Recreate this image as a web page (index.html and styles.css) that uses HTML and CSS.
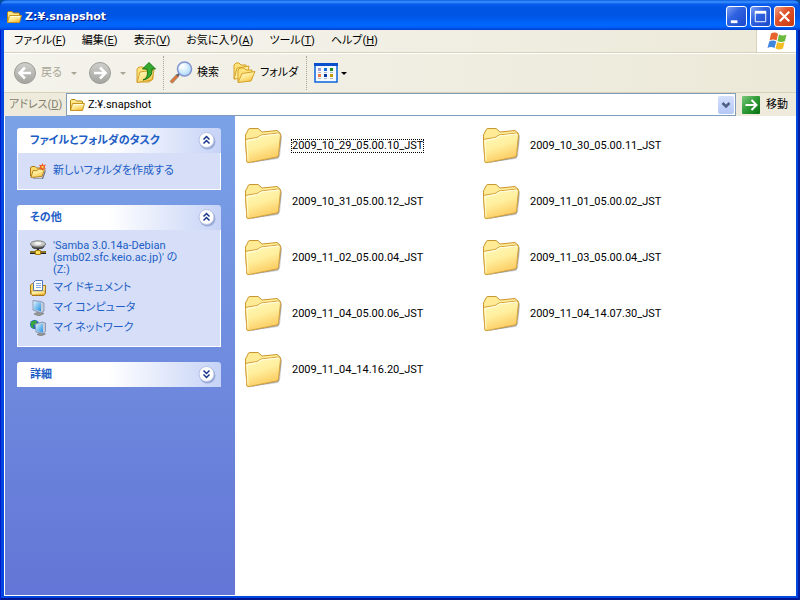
FILE: index.html
```html
<!DOCTYPE html>
<html lang="ja">
<head>
  <meta charset="UTF-8">
  <title>Z:¥.snapshot</title>
  <link rel="stylesheet" href="styles.css">
</head>
<body>

<svg class="defs" aria-hidden="true">
  <defs>
    <linearGradient id="gFolder" x1="0" y1="0" x2="0.6" y2="1">
      <stop offset="0" stop-color="#fffbcb"/>
      <stop offset="0.55" stop-color="#ffe992"/>
      <stop offset="1" stop-color="#f7bf42"/>
    </linearGradient>
    <linearGradient id="gBig" x1="0.1" y1="0" x2="0.5" y2="1">
      <stop offset="0" stop-color="#fff9bb"/>
      <stop offset="0.5" stop-color="#ffef9e"/>
      <stop offset="1" stop-color="#fcc95c"/>
    </linearGradient>
    <linearGradient id="gBack" x1="0" y1="0" x2="0" y2="1">
      <stop offset="0" stop-color="#fff6b0"/>
      <stop offset="1" stop-color="#edbc3c"/>
    </linearGradient>
    <linearGradient id="gGrey" x1="0" y1="0" x2="0" y2="1">
      <stop offset="0" stop-color="#cfcfcb"/>
      <stop offset="1" stop-color="#a3a3a0"/>
    </linearGradient>
    <linearGradient id="gGreen" x1="0" y1="0" x2="1" y2="1">
      <stop offset="0" stop-color="#7cc87c"/>
      <stop offset="0.5" stop-color="#2d9a35"/>
      <stop offset="1" stop-color="#08700f"/>
    </linearGradient>
    <radialGradient id="gLens" cx="0.4" cy="0.35" r="0.7">
      <stop offset="0" stop-color="#ffffff"/>
      <stop offset="1" stop-color="#a5d8fb"/>
    </radialGradient>
    <linearGradient id="gScreen" x1="0" y1="0" x2="1" y2="1">
      <stop offset="0" stop-color="#d9f2ff"/>
      <stop offset="1" stop-color="#238fe0"/>
    </linearGradient>
  </defs>

  <!-- big folder -->
  <symbol id="folder" viewBox="0 0 40 40">
    <path d="M4 37 L34 33 L36 30 L38 11 L36 8 V28 Z" fill="#666" opacity="0.3"/>
    <path d="M4 37.500 L33 32 Q35.500 31 35.500 28 L37.500 9 L36 8 L33 29 Z" fill="#666" opacity="0.6"/>
    <path d="M1.500 15 V9 L4 4 Q4.500 2.500 6 2.500 H14 L18 6 L33 4.500 L36.500 7.500 L34 29 L3 36 Z" fill="#ffeb96" stroke="#c9962f"/>
    <path d="M3 36 L1.500 15 Q1.500 13.500 3 13 L13 11.500 L17 9 L34.500 7 Q36.500 7 36.500 9 L34.500 29 Q34.500 30.500 33 31 L5 36.500 Q3 37 3 36 Z" fill="url(#gBig)" stroke="#d6a440"/>
    <path d="M2.500 15 L13.500 12.500 L17.500 10 L35 8" fill="none" stroke="#fffde6"/>
    <path d="M3 14 L4 35" stroke="#fffbd0"/>
  </symbol>

  <!-- small folder, title bar and address -->
  <symbol id="folder16" viewBox="0 0 16 16">
    <path d="M1.500 13 V3.500 L2.500 2.500 H6 L7.500 4 H13 L13.500 5 V7 L11 13 Z" fill="#ffe88a" stroke="#b8860b"/>
    <path d="M1.500 13.500 L3.500 6.500 H15.500 L13.500 13.500 Z" fill="url(#gFolder)" stroke="#c8951e"/>
    <path d="M4.500 7.500 H14" stroke="#fffde0"/>
  </symbol>

  <symbol id="back" viewBox="0 0 24 24">
    <circle cx="12" cy="12" r="10.500" fill="url(#gGrey)" stroke="#9c9c98"/>
    <path d="M18 12 H7 M12 6.500 L6.500 12 L12 17.500" fill="none" stroke="#fff" stroke-width="2.600"/>
  </symbol>
  <symbol id="forward" viewBox="0 0 24 24">
    <circle cx="12" cy="12" r="10.500" fill="url(#gGrey)" stroke="#9c9c98"/>
    <path d="M6 12 H17 M12 6.500 L17.500 12 L12 17.500" fill="none" stroke="#fff" stroke-width="2.600"/>
  </symbol>

  <symbol id="up" viewBox="0 0 24 24">
    <path d="M3 21 V8 L5 6 H9 L11 8 H19 V18 L15 21 Z" fill="#ffe27a" stroke="#d3a12b"/>
    <path d="M3 21.500 L6 11 L20 9 L18 19 Z" fill="url(#gFolder)" stroke="#d3a12b"/>
    <path d="M9 19 Q15 17 13 8 H8.500 L15 1.500 L21.500 8 H18 Q19 17 9 19 Z" fill="#35a92d" stroke="#187818"/>
  </symbol>

  <symbol id="search" viewBox="0 0 24 24">
    <path d="M9 14 L2 21.500" stroke="#9a9a9a" stroke-width="4"/>
    <path d="M9 14 L2 21.500" stroke="#e17632" stroke-width="2.500"/>
    <path d="M11 12 L8 15" stroke="#555b70" stroke-width="2"/>
    <circle cx="15.500" cy="8" r="7" fill="url(#gLens)" stroke="#8494d0" stroke-width="1.500"/>
    <path d="M11 8 Q11.500 4 15.500 3.500" fill="none" stroke="#fff" stroke-width="1.500"/>
  </symbol>

  <symbol id="folders" viewBox="0 0 24 24">
    <path d="M2 18 V4 L4 2 H7 L9 4 H14 V14 Z" fill="#ffe27a" stroke="#d3a12b"/>
    <path d="M2 18 L5 7 L17 5 L15 17 Z" fill="#ffeb99" stroke="#d3a12b"/>
    <path d="M6 21 V9 L8 7 H12 L14 9 H20 V18 Z" fill="#ffe27a" stroke="#d3a12b"/>
    <path d="M6 21.500 L10 12.500 L23 10.500 L19 20 Z" fill="url(#gFolder)" stroke="#d3a12b"/>
  </symbol>

  <symbol id="views" viewBox="0 0 24 20">
    <rect x="1" y="1" width="22" height="18" fill="#f4f8ff" stroke="#0a64d8" stroke-width="1.500"/>
    <rect x="0" y="0" width="24" height="3" fill="#0a50cc"/>
    <path d="M4 5h3v3h-3z" fill="#9c9ccc"/>
    <path d="M10 5h3v3h-3z" fill="#1870d8"/>
    <path d="M16 5h3v3h-3z" fill="#1c8c1c"/>
    <path d="M4 11h3v3h-3z" fill="#f07840"/>
    <path d="M10 11h3v3h-3z" fill="#0838a0"/>
    <path d="M16 11h3v3h-3z" fill="#c89c00"/>
    <path d="M4 9.500h3M10 9.500h3M16 9.500h3M4 15.500h3M10 15.500h3M16 15.500h3" stroke="#b8b8c0"/>
  </symbol>

  <symbol id="go" viewBox="0 0 18 18">
    <rect width="18" height="18" rx="1" fill="url(#gGreen)"/>
    <path d="M3.500 9 H14 M9.500 4 L14.500 9 L9.500 14" fill="none" stroke="#fff" stroke-width="2"/>
  </symbol>

  <symbol id="flag" viewBox="0 0 20 19">
    <path d="M4 1.500 Q8 -0.500 11 2 L9.500 8.500 Q6 6.500 2.500 8.500 Z" fill="#e8622c"/>
    <path d="M12 2.500 Q16 4.500 19.500 2.500 L18 9 Q14 11 10.500 9 Z" fill="#6cba3c"/>
    <path d="M2.200 9.500 Q6 7.500 9.200 9.500 L7.500 16 Q4 14 0.500 16 Z" fill="#3f86dc"/>
    <path d="M10.200 10 Q14 12 17.500 10 L16 16.500 Q12 18.500 8.500 16.500 Z" fill="#f6bc24"/>
  </symbol>

  <symbol id="up2" viewBox="0 0 18 18">
    <circle cx="9.500" cy="9.500" r="8" fill="#6b7fb8" opacity="0.5"/>
    <circle cx="8.500" cy="8" r="7.500" fill="#fff" stroke="#b4c0e4"/>
    <path d="M5.500 7.500 L8.500 4.500 L11.500 7.500 M5.500 11.500 L8.500 8.500 L11.500 11.500" fill="none" stroke="#17348c" stroke-width="1.500"/>
  </symbol>
  <symbol id="down2" viewBox="0 0 18 18">
    <circle cx="9.500" cy="9.500" r="8" fill="#6b7fb8" opacity="0.5"/>
    <circle cx="8.500" cy="8" r="7.500" fill="#fff" stroke="#b4c0e4"/>
    <path d="M5.500 4.500 L8.500 7.500 L11.500 4.500 M5.500 8.500 L8.500 11.500 L11.500 8.500" fill="none" stroke="#17348c" stroke-width="1.500"/>
  </symbol>

  <symbol id="newfolder" viewBox="0 0 16 16">
    <path d="M3 15.500 H12 L15.500 6 V9 L13 16 H3 Z" fill="#333" opacity="0.7"/>
    <path d="M0.500 13 V4.500 L2 3.500 H5 L6.500 5 H12 V12 Z" fill="#fbdc6c" stroke="#a87818"/>
    <path d="M1 14.500 L3 7.500 Q7 8.500 9 6 L14.500 6.500 L12 13.500 Z" fill="url(#gFolder)" stroke="#b48420"/>
    <path d="M12.500 0 L13.300 2.200 L16 1.500 L14.500 4 L16 6 L13.300 5.500 L12.500 8 L11.300 5.500 L9 6 L10.300 4 L9 1.800 L11.500 2.200 Z" fill="#f0501c"/>
    <circle cx="12.500" cy="4" r="1.200" fill="#ffd24a"/>
  </symbol>

  <symbol id="netdrive" viewBox="0 0 16 16">
    <path d="M0.500 4 L3 8 Q8 10 13 8 L15.500 4 Z" fill="#54544f" stroke="#444"/>
    <ellipse cx="8" cy="3.800" rx="7.500" ry="3" fill="#c8c8c4" stroke="#888"/>
    <ellipse cx="8" cy="3.200" rx="3.500" ry="1.500" fill="#f4f4f2"/>
    <path d="M7 8 h2 v3 h-2 z" fill="#333"/>
    <path d="M0 12.500 H16" stroke="#222" stroke-width="3"/>
    <path d="M0 12 H16" stroke="#f2c230"/>
    <path d="M5.500 10.500 h5 v4 h-5 z" fill="#ffdf5a" stroke="#a87c10"/>
  </symbol>

  <symbol id="docs" viewBox="0 0 16 16">
    <path d="M0.500 14 V5 L2.500 3.500 H5 V14.500 H2 Z" fill="#fbd75c" stroke="#a87818"/>
    <path d="M5 14 V5.500 H15.500 V13.500 L14 15.500 H2 Z" fill="#fbe28a" stroke="#a87818"/>
    <path d="M3.500 10.500 V2.500 L5.500 0.500 H12.500 V10.500 Z" fill="#fff" stroke="#5078bc"/>
    <path d="M6 3.500 H11 M6 5.500 H11 M6 7.500 H11" stroke="#86a8e0"/>
    <path d="M1.500 15 V11 H15 V14 L13.500 15 Z" fill="url(#gFolder)" stroke="#a87818" stroke-width="0.500"/>
  </symbol>

  <symbol id="pc" viewBox="0 0 16 16">
    <path d="M4 14 L9 11.500 L14 13.500 L9 16 Z" fill="#989890" stroke="#606058" stroke-width="0.500"/>
    <path d="M3 0.500 L11 1.500 L14 3 V11 L11 13 L3 10 Z" fill="#c4ccd8" stroke="#7888b0" stroke-width="0.800"/>
    <path d="M3.500 1.500 L11 2.500 V11.500 L3.500 9 Z" fill="url(#gScreen)"/>
  </symbol>

  <symbol id="net" viewBox="0 0 16 16">
    <circle cx="4.500" cy="4.500" r="4.500" fill="#1c64c8"/>
    <path d="M1 2 Q4 -0.500 7 1 L6 4 L3 5 L4 8 L2 8 Q0 5 1 2 Z" fill="#3aa838"/>
    <path d="M7 14.500 L11 12.500 L15.500 14 L11 16 Z" fill="#989890" stroke="#606058" stroke-width="0.500"/>
    <path d="M5 4 L12 2 L15.500 3 V11.500 L13 13.500 L6 12 Z" fill="#c4ccd8" stroke="#7888b0" stroke-width="0.800"/>
    <path d="M6 5 L13 3.500 V12.500 L6.500 11 Z" fill="url(#gScreen)"/>
  </symbol>
</svg>

<div class="window">
  <header class="titlebar">
    <svg class="ico16"><use href="#folder16"/></svg>
    <h1>Z:¥.snapshot</h1>
    <button class="winbtn" aria-label="最小化"><svg viewBox="0 0 20 20"><path d="M4 14h7v3h-7z" fill="#fff"/></svg></button>
    <button class="winbtn" aria-label="最大化"><svg viewBox="0 0 20 20"><path d="M4.500 6 V15.500 H15.500 V6" fill="none" stroke="#fff"/><path d="M4 5.500 H16" stroke="#fff" stroke-width="3"/></svg></button>
    <button class="winbtn close" aria-label="閉じる"><svg viewBox="0 0 20 20"><path d="M5 5 L15 15 M15 5 L5 15" stroke="#fff" stroke-width="2.200"/></svg></button>
  </header>

  <nav class="menubar">
    <button>ファイル(<u>F</u>)</button>
    <button>編集(<u>E</u>)</button>
    <button>表示(<u>V</u>)</button>
    <button>お気に入り(<u>A</u>)</button>
    <button>ツール(<u>T</u>)</button>
    <button>ヘルプ(<u>H</u>)</button>
    <div class="brand"><svg><use href="#flag"/></svg></div>
  </nav>

  <div class="toolbar">
    <button class="tool back" disabled><svg class="ico24"><use href="#back"/></svg>戻る<i class="caret"></i></button>
    <button class="tool forward" disabled aria-label="進む"><svg class="ico24"><use href="#forward"/></svg><i class="caret"></i></button>
    <button class="tool" aria-label="上へ"><svg class="ico24"><use href="#up"/></svg></button>
    <span class="sep"></span>
    <button class="tool"><svg class="ico24"><use href="#search"/></svg>検索</button>
    <button class="tool folders"><svg class="ico24"><use href="#folders"/></svg>フォルダ</button>
    <span class="sep"></span>
    <button class="tool views" aria-label="表示"><svg class="icoviews"><use href="#views"/></svg><i class="caret"></i></button>
  </div>

  <form class="address" onsubmit="return false">
    <label for="path">アドレス(<u>D</u>)</label>
    <div class="combo">
      <svg class="ico16"><use href="#folder16"/></svg>
      <input type="text" id="path" value="Z:¥.snapshot">
      <button type="button" class="drop" aria-label="一覧"><svg viewBox="0 0 16 18"><path d="M4.500 7 L8 10.500 L11.500 7" fill="none" stroke="#4d6185" stroke-width="2.500"/></svg></button>
    </div>
    <button class="go"><svg><use href="#go"/></svg>移動</button>
  </form>

  <div class="content">
    <aside class="sidebar">
      <section class="panel">
        <div class="panel-head">
          <h2>ファイルとフォルダのタスク</h2>
          <button aria-label="閉じる"><svg><use href="#up2"/></svg></button>
        </div>
        <div class="panel-body">
          <a href="#"><svg class="ico16"><use href="#newfolder"/></svg><span>新しいフォルダを作成する</span></a>
        </div>
      </section>

      <section class="panel">
        <div class="panel-head">
          <h2>その他</h2>
          <button aria-label="閉じる"><svg><use href="#up2"/></svg></button>
        </div>
        <div class="panel-body">
          <a href="#" class="drive"><svg class="ico16"><use href="#netdrive"/></svg><span>'Samba 3.0.14a-Debian<br>(smb02.sfc.keio.ac.jp)' の<br>(Z:)</span></a>
          <a href="#"><svg class="ico16"><use href="#docs"/></svg><span>マイ ドキュメント</span></a>
          <a href="#"><svg class="ico16"><use href="#pc"/></svg><span>マイ コンピュータ</span></a>
          <a href="#"><svg class="ico16"><use href="#net"/></svg><span>マイ ネットワーク</span></a>
        </div>
      </section>

      <section class="panel">
        <div class="panel-head">
          <h2>詳細</h2>
          <button aria-label="開く"><svg><use href="#down2"/></svg></button>
        </div>
      </section>
    </aside>

    <main class="files">
      <a href="#" class="file focused"><svg><use href="#folder"/></svg><span>2009_10_29_05.00.10_JST</span></a>
      <a href="#" class="file"><svg><use href="#folder"/></svg><span>2009_10_30_05.00.11_JST</span></a>
      <a href="#" class="file"><svg><use href="#folder"/></svg><span>2009_10_31_05.00.12_JST</span></a>
      <a href="#" class="file"><svg><use href="#folder"/></svg><span>2009_11_01_05.00.02_JST</span></a>
      <a href="#" class="file"><svg><use href="#folder"/></svg><span>2009_11_02_05.00.04_JST</span></a>
      <a href="#" class="file"><svg><use href="#folder"/></svg><span>2009_11_03_05.00.04_JST</span></a>
      <a href="#" class="file"><svg><use href="#folder"/></svg><span>2009_11_04_05.00.06_JST</span></a>
      <a href="#" class="file"><svg><use href="#folder"/></svg><span>2009_11_04_14.07.30_JST</span></a>
      <a href="#" class="file"><svg><use href="#folder"/></svg><span>2009_11_04_14.16.20_JST</span></a>
    </main>
  </div>
</div>

</body>
</html>
```
FILE: styles.css
```css
* {
  box-sizing: border-box;
}

body {
  margin: 0;
  background: #004e98;
  font-family: Roboto, "Noto Sans CJK JP", sans-serif;
  font-size: 11px;
  line-height: 12px;
  font-feature-settings: "palt";
  color: #000;
}

button,
input {
  font: inherit;
  font-feature-settings: inherit;
  color: inherit;
  border: none;
  background: none;
  padding: 0;
  margin: 0;
}

a {
  color: inherit;
  text-decoration: none;
}

svg {
  display: block;
  flex: none;
}

.defs {
  position: absolute;
  width: 0;
  height: 0;
}

.ico16 {
  width: 16px;
  height: 16px;
}

.ico24 {
  width: 24px;
  height: 24px;
}

.window {
  display: flex;
  flex-direction: column;
  min-height: 100vh;
  padding: 0 4px 4px;
  border-radius: 7px 7px 0 0;
  background: #0046e0;
  box-shadow: inset 1px 0 #0019cf, inset -2px 0 #001ea0, inset 0 -2px #001590;
}

/* title bar */
.titlebar {
  display: flex;
  align-items: center;
  gap: 3px;
  height: 30px;
  margin: 0 -4px;
  padding: 3px 5px 0 6px;
  border-radius: 7px 7px 0 0;
  background: linear-gradient(#0a5ce0 0, #3c94ff 2px, #0a5cec 4px, #0054e3 8px, #0055e5 16px, #0066ff 24px, #0062f8 27px, #003dd0 30px);
}

.titlebar h1 {
  flex: 1;
  margin: 0;
  font: bold 11px/16px "DejaVu Sans", "Noto Sans CJK JP", sans-serif;
  color: #fff;
  text-shadow: 1px 1px #0a1883;
}

.winbtn {
  width: 21px;
  height: 21px;
  border: 1px solid #fff;
  border-radius: 3px;
  background: linear-gradient(135deg, #7c9ff4, #2f62e0 40%, #1c48cc);
}

.winbtn svg {
  width: 19px;
  height: 19px;
}

.winbtn.close {
  background: linear-gradient(135deg, #f0a088, #e0532c 40%, #c83a10);
}

/* menu */
.menubar {
  display: flex;
  align-items: stretch;
  height: 23px;
  padding-left: 2px;
  background: linear-gradient(90deg, #f6f5f0, #ece9d8);
  border-bottom: 1px solid #d8d2bd;
}

.menubar button {
  padding: 0 8px;
}

.brand {
  display: flex;
  align-items: center;
  justify-content: center;
  width: 40px;
  margin-left: auto;
  background: #fff;
  border-left: 1px solid #d8d2bd;
}

.brand svg {
  width: 20px;
  height: 19px;
}

/* toolbar */
.toolbar {
  display: flex;
  align-items: center;
  gap: 8px;
  height: 40px;
  padding-left: 9px;
  background: linear-gradient(90deg, #f4f3ec, #ece9d8);
  border-top: 1px solid #fff;
  border-bottom: 1px solid #d8d2bd;
}

.tool {
  display: flex;
  align-items: center;
  gap: 4px;
}

.tool:disabled {
  color: #a8a594;
}

.back {
  width: 64px;
}

.forward {
  width: 38px;
}

.back,
.folders {
  margin-right: 3px;
}

.folders {
  margin-left: 5px;
}

.back .caret,
.forward .caret {
  margin-left: auto;
}

.caret {
  border: 3px solid transparent;
  border-top-color: currentColor;
  border-bottom: none;
}

.sep {
  height: 34px;
  margin: 0 -3px;
  border-left: 1px dotted #a8a594;
}

.views {
  gap: 3px;
  margin-left: 2px;
}

.icoviews {
  width: 24px;
  height: 20px;
}

/* address */
.address {
  display: flex;
  align-items: center;
  height: 23px;
  padding: 0 8px 0 5px;
  background: #eeebdd;
}

.address label {
  width: 57px;
  color: #85826f;
}

.combo {
  display: flex;
  align-items: center;
  flex: 1;
  gap: 3px;
  height: 23px;
  padding: 0 1px 0 2px;
  background: #fff;
  border: 1px solid #7f9db9;
}

.combo input {
  flex: 1;
  min-width: 0;
  outline: none;
}

.drop {
  width: 16px;
  height: 18px;
  border-radius: 2px;
  background: linear-gradient(#d5e0fd, #b4c8f6);
}

.drop svg {
  width: 16px;
  height: 18px;
}

.go {
  display: flex;
  align-items: center;
  gap: 6px;
  margin-left: 6px;
}

.go svg {
  width: 18px;
  height: 18px;
}

/* content */
.content {
  display: flex;
  flex: 1;
  background: #fff;
  border: solid #fff;
  border-width: 0 0 1px 1px;
}

.sidebar {
  display: flex;
  flex-direction: column;
  gap: 15px;
  width: 230px;
  padding: 12px 14px 12px 12px;
  background: linear-gradient(#7ba2e7, #6375d6);
  color: #215dc6;
}

.panel-head {
  display: flex;
  align-items: center;
  justify-content: space-between;
  height: 25px;
  padding: 0 5px 0 13px;
  border-radius: 3px 3px 0 0;
  background: linear-gradient(90deg, #fff 45%, #c6d3f7);
}

.panel-head h2 {
  margin: 0;
  font-size: 11px;
  line-height: 12px;
}

.panel-head svg {
  width: 18px;
  height: 18px;
}

.panel-body {
  display: flex;
  flex-direction: column;
  gap: 4px;
  padding: 10px 12px;
  background: #d6dff7;
  border: 1px solid #fff;
  border-top: none;
}

.panel-body a {
  display: flex;
  align-items: center;
  gap: 7px;
}

.panel-body .drive {
  align-items: flex-start;
}

.panel-body .drive span {
  white-space: nowrap;
}

/* file list */
.files {
  display: grid;
  grid-template-columns: repeat(auto-fill, 238px);
  grid-auto-rows: 38px;
  gap: 18px 0;
  align-content: start;
  flex: 1;
  padding: 11px 0 0 9px;
}

.file {
  display: flex;
  align-items: center;
  gap: 7px;
}

.file svg {
  width: 40px;
  height: 40px;
}

.file span {
  border: 1px dotted transparent;
}

.focused span {
  border-color: #000;
}
```
